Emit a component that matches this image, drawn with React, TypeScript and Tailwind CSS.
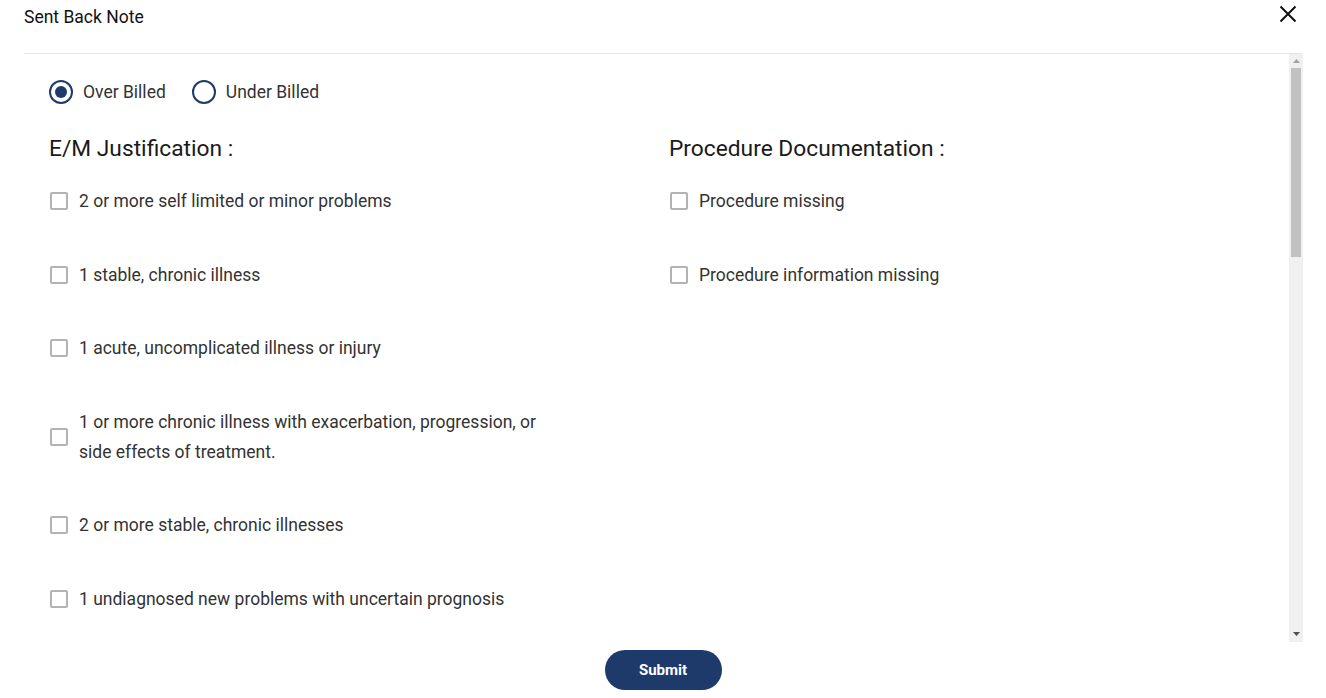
import { useState } from "react";

const emItems = [
  "2 or more self limited or minor problems",
  "1 stable, chronic illness",
  "1 acute, uncomplicated illness or injury",
  "1 or more chronic illness with exacerbation, progression, or side effects of treatment.",
  "2 or more stable, chronic illnesses",
  "1 undiagnosed new problems with uncertain prognosis",
];

const procItems = ["Procedure missing", "Procedure information missing"];

function Radio({ label, checked, onClick }: { label: string; checked: boolean; onClick: () => void }) {
  return (
    <button type="button" onClick={onClick} className="flex items-center gap-[10px] cursor-pointer">
      <span className="w-[24px] h-[24px] rounded-full border-2 border-[#1e3a6a] flex items-center justify-center">
        {checked && <span className="w-[12px] h-[12px] rounded-full bg-[#1e3a6a]" />}
      </span>
      <span className="text-[17.5px] leading-[24px] text-[#333]">{label}</span>
    </button>
  );
}

function CheckRow({ label }: { label: string }) {
  const [on, setOn] = useState(false);
  return (
    <label className="flex items-center gap-[11px] cursor-pointer">
      <span
        onClick={() => setOn(!on)}
        className={`ml-[1px] w-[18px] h-[18px] shrink-0 rounded-[2px] border-2 ${on ? "border-[#1e3a6a] bg-[#1e3a6a]" : "border-[#b3b3b3] bg-white"}`}
      />
      <span className="max-w-[475px] text-[17.5px] leading-[30px] text-[#333]">{label}</span>
    </label>
  );
}

export default function App() {
  const [billing, setBilling] = useState("over");

  return (
    <div className="w-full h-[698px] bg-white overflow-hidden font-['Roboto',sans-serif] text-[#212121]">
      <header className="mx-[24px] h-[54px] border-b border-[#e6e6e6] flex items-start justify-between">
        <h1 className="mt-[5px] text-[17.5px] leading-[24px] text-[#111]">Sent Back Note</h1>
        <button type="button" className="mt-[4px] mr-[4px] w-[20px] h-[20px] flex items-center justify-center">
          <svg width="18" height="18" viewBox="0 0 18 18" fill="none" stroke="#111" strokeWidth="2">
            <path d="M1.5 1.5 L16.5 16.5 M16.5 1.5 L1.5 16.5" />
          </svg>
        </button>
      </header>

      <div className="ml-[24px] mr-[23px] h-[588px] flex">
        <div className="flex-1 pl-[25px] pt-[26px]">
          <div className="flex items-center gap-[26px]">
            <Radio label="Over Billed" checked={billing === "over"} onClick={() => setBilling("over")} />
            <Radio label="Under Billed" checked={billing === "under"} onClick={() => setBilling("under")} />
          </div>

          <div className="grid grid-cols-2 mt-[31px]">
            <section>
              <h2 className="text-[22.75px] leading-[28px] text-[#1a1a1a]">E/M Justification :</h2>
              <div className="mt-[23px] flex flex-col gap-[43.6px]">
                {emItems.map((t) => (
                  <CheckRow key={t} label={t} />
                ))}
              </div>
            </section>
            <section>
              <h2 className="text-[22.75px] leading-[28px] text-[#1a1a1a]">Procedure Documentation :</h2>
              <div className="mt-[23px] flex flex-col gap-[43.6px]">
                {procItems.map((t) => (
                  <CheckRow key={t} label={t} />
                ))}
              </div>
            </section>
          </div>
        </div>

        <div className="w-[14px] bg-[#f0f0f0] flex flex-col items-center">
          <svg className="mt-[5px]" width="7" height="4" viewBox="0 0 7 4">
            <path d="M0 4 L3.5 0 L7 4 Z" fill="#a3a3a3" />
          </svg>
          <div className="mt-[5px] w-[10px] h-[189px] bg-[#c1c1c1]" />
          <div className="flex-1" />
          <svg className="mb-[6px]" width="7" height="4" viewBox="0 0 7 4">
            <path d="M0 0 L7 0 L3.5 4 Z" fill="#505050" />
          </svg>
        </div>
      </div>

      <div className="flex justify-center pt-[8px]">
        <button type="button" className="w-[117px] h-[40px] rounded-full bg-[#1e3a6a] text-white text-[15px] font-bold">
          Submit
        </button>
      </div>
    </div>
  );
}
